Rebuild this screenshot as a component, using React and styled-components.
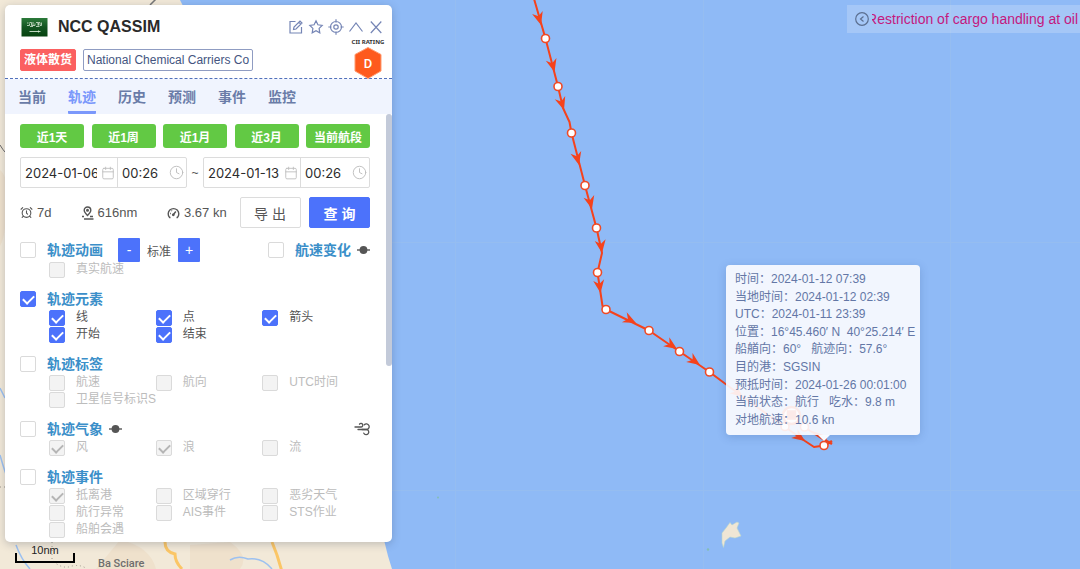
import React from "react";
import styled, { createGlobalStyle, css } from "styled-components";
import { AlarmClock, Calendar, Clock } from "lucide-react";

const GlobalStyle = createGlobalStyle`
  * { box-sizing: border-box; }
  body {
    margin: 0;
    font-family: "Liberation Sans", "Noto Sans CJK SC", sans-serif;
    font-size: 12px;
    color: #555;
  }
  button, input { font: inherit; color: inherit; margin: 0; }
`;

const Page = styled.main`
  position: relative;
  min-height: 100vh;
  overflow: hidden;
  background: #8fbaf6;
`;

const MapCanvas = styled.svg`
  position: absolute;
  inset: 0;
  width: 100%;
  height: 100%;
  display: block;
`;

/* ---------- map overlays ---------- */

const Notice = styled.div`
  position: absolute;
  top: 5px;
  right: 0;
  width: 233px;
  height: 28px;
  padding: 0 2px 0 7px;
  display: flex;
  align-items: center;
  gap: 2px;
  background: rgba(255, 255, 255, 0.2);
`;

const NoticeToggle = styled.button`
  flex: none;
  width: 16px;
  height: 16px;
  padding: 0;
  border: 0;
  background: none;
  display: flex;
`;

const NoticeText = styled.span`
  flex: 1;
  min-width: 0;
  overflow: hidden;
  display: flex;
  justify-content: flex-end;
  white-space: nowrap;
  font-size: 14px;
  line-height: 20px;
  color: #c4187e;
`;

const Scale = styled.div`
  position: absolute;
  left: 15px;
  bottom: 6px;
  width: 60px;
  height: 20px;
  text-align: center;
  font-size: 11px;
  line-height: 14px;
  color: #222;

  &::after {
    content: "";
    position: absolute;
    left: 0;
    right: 0;
    bottom: 0;
    height: 8px;
    border: 2px solid #000;
    border-top: 0;
  }
`;

const Tooltip = styled.div`
  position: absolute;
  left: 726px;
  top: 265px;
  width: 194px;
  height: 170px;
  padding: 6px 9px;
  display: grid;
  grid-auto-rows: 1fr;
  align-items: center;
  white-space: pre;
  line-height: 17px;
  color: #6377a6;
  background: rgba(253, 253, 255, 0.9);
  border-radius: 4px;
  box-shadow: 0 2px 10px rgba(30, 60, 120, 0.2);

  &::after {
    content: "";
    position: absolute;
    left: 92px;
    top: 100%;
    border: 6px solid transparent;
    border-top-color: #f8fbff;
    border-bottom: 0;
  }
`;

/* ---------- panel ---------- */

const Panel = styled.section`
  position: absolute;
  left: 5px;
  top: 5px;
  width: 387px;
  background: #fff;
  border-radius: 5px;
  box-shadow: 0 2px 8px rgba(40, 50, 80, 0.25);
`;

const Header = styled.header`
  height: 74px;
  padding: 11px 8px 0 15px;
  display: flex;
  justify-content: space-between;
  border-bottom: 1px dashed #5070bb;
`;

const HeaderMain = styled.div`
  display: flex;
  flex-direction: column;
  gap: 11px;
`;

const TitleRow = styled.div`
  height: 22px;
  display: flex;
  align-items: center;
  gap: 10px;
`;

const ShipName = styled.h1`
  margin: 0;
  font-size: 16px;
  line-height: 24px;
  color: #2a2a2a;
`;

const TagRow = styled.div`
  display: flex;
  gap: 7px;
`;

const Tag = styled.span`
  height: 22px;
  padding: 0 3px;
  line-height: 20px;
  border: 1px solid ${(p) => (p.$solid ? "#fb6060" : "#8f9cc2")};
  border-radius: 2px;
  background: ${(p) => (p.$solid ? "#fb6060" : "#fff")};
  color: ${(p) => (p.$solid ? "#fff" : "#44557f")};
  font-weight: ${(p) => (p.$solid ? 700 : 400)};
`;

const HeaderSide = styled.div`
  display: flex;
  flex-direction: column;
  align-items: flex-end;
`;

const Actions = styled.div`
  flex: none;
  height: 22px;
  display: flex;
  align-items: center;
  gap: 4px;
`;

const IconButton = styled.button`
  width: 16px;
  height: 16px;
  padding: 0;
  border: 0;
  background: none;
  color: #7585b5;
  display: flex;
`;

const Rating = styled.div`
  flex: none;
  width: 32px;
  display: flex;
  flex-direction: column;
  align-items: center;
  font-size: 6px;
  line-height: 8px;
  font-family: "Noto Sans", sans-serif;
  font-weight: 700;
  white-space: nowrap;
  color: #333;
`;

const RatingBadge = styled.svg`
  position: relative;
  display: block;
`;

const Tabs = styled.nav`
  height: 35px;
  padding: 0 13px;
  display: flex;
  gap: 22px;
  background: #f0f4fe;
`;

const Tab = styled.button`
  padding: 2px 0 0;
  border: 0;
  border-bottom: 3px solid ${(p) => (p.$active ? "#7b98fb" : "transparent")};
  border-radius: 1px;
  background: none;
  font-size: 14px;
  font-weight: 700;
  color: ${(p) => (p.$active ? "#7b98fb" : "#6a7ca8")};
`;

const Body = styled.div`
  position: relative;
  padding: 10px 22px 4px 15px;

  &::after {
    content: "";
    position: absolute;
    right: 0;
    top: 0;
    width: 6px;
    height: 252px;
    border-radius: 3px;
    background: #c3cad9;
  }
`;

const QuickRow = styled.div`
  display: flex;
  justify-content: space-between;
`;

const QuickButton = styled.button`
  width: 64px;
  height: 24px;
  padding: 0;
  border: 0;
  border-radius: 3px;
  background: #62c944;
  color: #fff;
  font-weight: 700;
`;

const DateRow = styled.div`
  margin-top: 9px;
  display: flex;
  align-items: center;
  justify-content: space-between;
`;

const DateTime = styled.div`
  width: 167px;
  height: 31px;
  display: flex;
  border: 1px solid #dcdcdc;
  border-radius: 2px;
`;

const Field = styled.label`
  flex: ${(p) => (p.$date ? "0 0 97px" : "1 1 0")};
  min-width: 0;
  padding: 0 2px 0 4px;
  display: flex;
  align-items: center;
  gap: 4px;
  color: #bdbdbd;
  ${(p) => p.$date && css`border-right: 1px solid #dcdcdc;`}

  svg { flex: none; }
`;

const FieldInput = styled.input`
  flex: 1;
  min-width: 0;
  width: 0;
  height: 28px;
  padding: 0;
  border: 0;
  outline: 0;
  background: none;
  font-family: Inter, sans-serif;
  font-size: 13px;
  color: #2c2c2c;
`;

const StatRow = styled.div`
  margin-top: 9px;
  display: flex;
  align-items: center;
  justify-content: space-between;
`;

const Stat = styled.span`
  width: ${(p) => p.$w}px;
  display: flex;
  align-items: center;
  gap: 4px;
  font-size: 13px;
  white-space: nowrap;
`;

const ActionButton = styled.button`
  width: 61px;
  height: 31px;
  padding: 0;
  border: 1px solid ${(p) => (p.$primary ? "#4c72fb" : "#dcdcdc")};
  border-radius: 2px;
  background: ${(p) => (p.$primary ? "#4c72fb" : "#fff")};
  color: ${(p) => (p.$primary ? "#fff" : "#555")};
  font-size: 14px;
  font-weight: ${(p) => (p.$primary ? 700 : 400)};
`;

const Sections = styled.div`
  margin-top: 11px;
  display: flex;
  flex-direction: column;
  gap: 11px;
`;

const SectionHead = styled.div`
  height: ${(p) => (p.$tall ? 22 : 20)}px;
  display: flex;
  align-items: center;
  justify-content: space-between;
`;

const HeadGroup = styled.div`
  display: flex;
  align-items: center;
  gap: 6px;
`;

const SectionLabel = styled.label`
  display: flex;
  align-items: center;
  gap: 11px;
  font-size: 14px;
  font-weight: 700;
  line-height: 20px;
  color: #3b8fc9;
`;

const Stepper = styled.div`
  margin-left: 9px;
  display: flex;
  align-items: center;
  gap: 7px;
`;

const StepButton = styled.button`
  width: 22px;
  height: 24px;
  padding: 0;
  border: 0;
  border-radius: 1px;
  background: #4c72fb;
  color: #fff;
  font-size: 14px;
`;

const Options = styled.div`
  margin: 0 1px 0 29px;
  display: grid;
  grid-template-columns: repeat(3, minmax(0, 1fr));
  grid-auto-rows: 17px;
`;

const Option = styled.label`
  display: flex;
  align-items: center;
  gap: 11px;
  line-height: 17px;
  white-space: nowrap;
  color: ${(p) => (p.$disabled ? "#bcbcbc" : "#555")};
`;

const Check = styled.input`
  appearance: none;
  flex: none;
  position: relative;
  width: 16px;
  height: 16px;
  border: 1px solid #dadada;
  border-radius: 2px;
  background: #fff;

  &:checked { background: #4c72fb; border-color: #4c72fb; }
  &:disabled { background: #f3f3f3; border-color: #dadada; }

  &:checked::after {
    content: "";
    position: absolute;
    left: 4px;
    top: 1px;
    width: 5px;
    height: 9px;
    border: solid #fff;
    border-width: 0 2px 2px 0;
    transform: rotate(45deg);
  }
  &:checked:disabled::after { border-color: #b5b5b5; }
`;

/* ---------- drawings ---------- */

const Flag = () => (
  <svg width="28" height="22" viewBox="0 0 28 22" aria-hidden="true">
    <defs>
      <linearGradient id="flag" x1="0" y1="0" x2="0" y2="1">
        <stop offset="0" stopColor="#2c7a3a" />
        <stop offset="0.5" stopColor="#125421" />
        <stop offset="1" stopColor="#07420f" />
      </linearGradient>
    </defs>
    <rect x="1.5" y="2" width="26" height="18.5" fill="url(#flag)" />
    <path d="M7 9.500h2.500V7.500M9.500 6.500h2v3h1.500M13 6v3.500h2V7.500M16 6.500h2v3M18.500 9.500V6.500h1.500v3h1.500V6.500M7 7h1.500M10 10.500h3M16 10.500h3.500" fill="none" stroke="#d4e5d2" strokeWidth="0.8" />
    <path d="M9.500 15.500h11M18.500 14.500v2" stroke="#d4e5d2" strokeWidth="0.9" />
  </svg>
);

const icons = {
  编辑: "M7.500 2.500h-5.500v11.500h11.500v-6M5.500 10.500l.5-2.500 6-6 2 2-6 6zM10.800 3.200l2 2",
  收藏: "M8 1.800l1.900 4 4.300.6-3.100 3 .7 4.400L8 11.700l-3.800 2.100.7-4.400-3.100-3 4.300-.6z",
  定位: "M8 2.500a5.500 5.500 0 1 0 0 11a5.500 5.500 0 1 0 0-11M8 5.800a2.200 2.200 0 1 0 0 4.400a2.200 2.200 0 1 0 0-4.400M8 .3v3.200M8 12.500v3.200M.3 8h3.200M12.500 8h3.200",
  收起: "M1.500 12.500L8 4l6.500 8.500",
  关闭: "M2.800 2.500l10.500 11.500M13.300 2.500L2.800 14",
};

const LineIcon = ({ d, size = 16 }) => (
  <svg width={size} height={size} viewBox="0 0 16 16" fill="none" stroke="currentColor" strokeWidth="1.2" aria-hidden="true">
    <path d={d} />
  </svg>
);

const DistanceIcon = () => (
  <svg width="13" height="14" viewBox="0 0 13 14" fill="none" stroke="#555" strokeWidth="1.400" aria-hidden="true">
    <path d="M6.500 9.500C4.500 7.500 3.200 6 3.200 4.300a3.300 3.300 0 0 1 6.600 0C9.800 6 8.500 7.500 6.500 9.500z" />
    <circle cx="6.500" cy="4.300" r="0.800" />
    <path d="M3 10.500H1M9 10.500h3M3 13h9.500" />
  </svg>
);

const SpeedIcon = () => (
  <svg width="13" height="13" viewBox="0 0 13 13" fill="none" stroke="#555" strokeWidth="1.400" aria-hidden="true">
    <path d="M3.500 11.500H2.600A5.300 5.300 0 1 1 10.400 11.500H9.500" />
    <path d="M6.500 8.500L8.800 5.500M3.200 7.500h.8M4.500 4.500l.4.400" />
    <circle cx="6.300" cy="8.800" r="0.700" />
  </svg>
);

const WindIcon = () => (
  <svg width="16" height="14" viewBox="0 0 16 14" fill="none" stroke="#555" strokeWidth="1.300" strokeLinecap="round" aria-hidden="true">
    <path d="M1 5H7A1.800 1.800 0 1 0 5.500 2.200" />
    <path d="M4 7.500H12.500A2.800 2.800 0 1 0 10.300 2.800" />
    <path d="M8 7.500H12.500A2.600 2.600 0 1 1 9.800 11.200" />
  </svg>
);

const SliderDot = () => (
  <svg width="13" height="10" viewBox="0 0 13 10" fill="#555" aria-hidden="true">
    <path d="M0 4.300h13v1.400H0z" />
    <circle cx="6.500" cy="5" r="3.900" />
  </svg>
);

const trackPoints = [
  [545.5, 38.5], [558, 86.5], [571.5, 133], [585, 185.5], [596.5, 228], [597.5, 272.5],
  [606, 309.5], [649, 330.5], [679.5, 351.5], [709.5, 372],
];

const arrows = [
  [541, 25, 74], [554.5, 72, 75], [564, 110, 72], [579, 165, 76], [592, 209, 76],
  [602, 253, 82], [600.5, 293, 82], [636, 323, 26], [677, 349, 34], [700, 365, 35],
  [743, 397, 38], [805, 441, 35],
];

const MapView = () => (
  <MapCanvas aria-hidden="true">
    <path d="M0 0H180L184 8L240 120L300 300L340 440L384 540L388 556L392 569L400 600L420 2000H0z" fill="#f2e9d8" />
    <path d="M0 170q12 10 6 50q-2 20-6 26zM120 540q30 6 36 29h-60zM190 545l40-3q20 14 10 27h-50z" fill="#eddcc5" opacity="0.6" />
    <path d="M0 388l5 10M0 455q5 18 8 24M16 545q5 14 14 24M230 560q8-5 18-1q14-2 24 10" fill="none" stroke="#9dc1f0" strokeWidth="1.500" />
    <path d="M150 5l6-6" stroke="#777" strokeWidth="1.500" />
    <path d="M165 542q0 10 10 12q0 8 7 15M272 542q6 14 10 30" fill="none" stroke="#fbc666" strokeWidth="3" />
    <path d="M52 542v18q10 10 20 6q10-2 16 4M0 487h5" fill="none" stroke="#9c968c" strokeDasharray="1 3" />
    <path d="M0 145q3 5 5 7" fill="none" stroke="#666" />
    <text x="98" y="567" fontSize="11" fontFamily="Roboto, sans-serif" fontWeight="500" fill="#6e6e6e">Ba Sciare</text>
    <path d="M455.500 0V2000M703.500 0V2000M950.500 0V2000M392 242.500H3000M392 490.500H3000" stroke="#9bc0ee" strokeWidth="1" opacity="0.5" />
    <path d="M722 533l4-5 4-5.500 2 2.500 5-3 2 1-2 5 4 8-6 2-5-1-5 4-1.500 6.500-1.500-4.500z" fill="#efe6d5" stroke="#b9d6cd" strokeWidth="0.600" />
    <circle cx="708" cy="549.500" r="1.200" fill="#84bdb5" />
    <circle cx="438" cy="497.500" r="1" fill="#84bdb5" />
    <g fill="none" stroke="#f5421c" strokeWidth="2" strokeLinejoin="round">
      <path d="M533.500-3L545.500 38.500L558 86.500L563 108L569.500 122L571.500 133L585 185.500L596.500 228L602 253L597.500 272.500L602.500 306L606 309.500L649 330.500L679.500 351.500L709.500 372L743 397L785 427L805 441L814 447L824 445.500L826 437L812 432L804 427L791 417" />
      <path d="M814 433l9 6 9 5M822 447l10-6" strokeWidth="2.500" />
    </g>
    {arrows.map(([x, y, a]) => (
      <path key={x} d="M0 0L-13-5.500L-9 0L-13 5.500z" transform={`translate(${x} ${y}) rotate(${a})`} fill="#f5421c" />
    ))}
    <g fill="#fff" stroke="#ef4a26" strokeWidth="1.600">
      {trackPoints.map(([x, y]) => <circle key={y} cx={x} cy={y} r="4" />)}
      <circle cx="785" cy="426.5" r="4" />
      <circle cx="804.5" cy="427" r="4" />
      <circle cx="824" cy="445.5" r="4" />
      <circle cx="791.5" cy="415.5" r="8.5" strokeWidth="2.5" />
      <rect x="787.5" y="411" width="8" height="8" fill="#f5421c" />
    </g>
  </MapCanvas>
);

/* ---------- data ---------- */

const tabs = ["当前", "轨迹", "历史", "预测", "事件", "监控"];
const quick = ["近1天", "近1周", "近1月", "近3月", "当前航段"];

const details = [
  "时间：2024-01-12 07:39",
  "当地时间：2024-01-12 02:39",
  "UTC：2024-01-11 23:39",
  "位置：16°45.460′ N  40°25.214′ E",
  "船艏向：60°   航迹向：57.6°",
  "目的港：SGSIN",
  "预抵时间：2024-01-26 00:01:00",
  "当前状态：航行   吃水：9.8 m",
  "对地航速：10.6 kn",
];

const OptionList = ({ items, checked = [], disabled }) => (
  <Options>
    {items.map((name) => (
      <Option key={name} $disabled={disabled}>
        <Check type="checkbox" defaultChecked={checked.includes(name)} disabled={disabled} />
        {name}
      </Option>
    ))}
  </Options>
);

const SectionTitle = ({ children, checked }) => (
  <SectionLabel>
    <Check type="checkbox" defaultChecked={checked} />
    {children}
  </SectionLabel>
);

const DateTimeField = ({ name, date, time }) => (
  <DateTime>
    <Field $date>
      <FieldInput aria-label={`${name}日期`} defaultValue={date} />
      <Calendar size={14} strokeWidth={1.5} />
    </Field>
    <Field>
      <FieldInput aria-label={`${name}时间`} defaultValue={time} />
      <Clock size={15} strokeWidth={1.5} />
    </Field>
  </DateTime>
);

export default function App() {
  return (
    <Page>
      <GlobalStyle />
      <MapView />
      <Notice>
        <NoticeToggle aria-label="收起公告">
          <svg width="16" height="16" viewBox="0 0 16 16" fill="none" stroke="#5b6f90" strokeWidth="1.2">
            <circle cx="8" cy="8" r="6.3" />
            <path d="M9.500 5.500L6.500 8l3 2.500" />
          </svg>
        </NoticeToggle>
        <NoticeText><span>Restriction of cargo handling at oil</span></NoticeText>
      </Notice>
      <Tooltip role="tooltip">
        {details.map((line) => <span key={line}>{line}</span>)}
      </Tooltip>
      <Scale>10nm</Scale>

      <Panel>
        <Header>
          <HeaderMain>
            <TitleRow>
              <Flag />
              <ShipName>NCC QASSIM</ShipName>
            </TitleRow>
            <TagRow>
              <Tag $solid>液体散货</Tag>
              <Tag>National Chemical Carriers Co</Tag>
            </TagRow>
          </HeaderMain>
          <HeaderSide>
            <Actions>
              {Object.entries(icons).map(([name, d]) => (
                <IconButton key={name} aria-label={name}><LineIcon d={d} /></IconButton>
              ))}
            </Actions>
            <Rating>
              CII RATING
              <RatingBadge width="30" height="34" viewBox="0 0 30 34">
                <path d="M15 1.500L28 8.500V25L15 32.500L2 25V8.500z" fill="#fe5a1d" stroke="#ff9b70" strokeWidth="1" />
                <text x="15" y="21.5" textAnchor="middle" fontSize="13" fontWeight="500" fontFamily="Roboto, sans-serif" fill="#fff">D</text>
              </RatingBadge>
            </Rating>
          </HeaderSide>
        </Header>

        <Tabs>
          {tabs.map((name) => <Tab key={name} $active={name === "轨迹"}>{name}</Tab>)}
        </Tabs>

        <Body>
          <QuickRow>
            {quick.map((name) => <QuickButton key={name}>{name}</QuickButton>)}
          </QuickRow>
          <DateRow>
            <DateTimeField name="开始" date="2024-01-06" time="00:26" />
            <span>~</span>
            <DateTimeField name="结束" date="2024-01-13" time="00:26" />
          </DateRow>
          <StatRow>
            <Stat $w={52}><AlarmClock size={13} />7d</Stat>
            <Stat $w={78}><DistanceIcon />616nm</Stat>
            <Stat $w={64}><SpeedIcon />3.67 kn</Stat>
            <ActionButton>导 出</ActionButton>
            <ActionButton $primary>查 询</ActionButton>
          </StatRow>

          <Sections>
            <div>
              <SectionHead $tall>
                <HeadGroup>
                  <SectionTitle>轨迹动画</SectionTitle>
                  <Stepper>
                    <StepButton aria-label="减速">-</StepButton>
                    标准
                    <StepButton aria-label="加速">+</StepButton>
                  </Stepper>
                </HeadGroup>
                <HeadGroup>
                  <SectionTitle>航速变化</SectionTitle>
                  <SliderDot />
                </HeadGroup>
              </SectionHead>
              <OptionList items={["真实航速"]} disabled />
            </div>
            <div>
              <SectionHead><SectionTitle checked>轨迹元素</SectionTitle></SectionHead>
              <OptionList items={["线", "点", "箭头", "开始", "结束"]} checked={["线", "点", "箭头", "开始", "结束"]} />
            </div>
            <div>
              <SectionHead><SectionTitle>轨迹标签</SectionTitle></SectionHead>
              <OptionList items={["航速", "航向", "UTC时间", "卫星信号标识S"]} disabled />
            </div>
            <div>
              <SectionHead>
                <HeadGroup>
                  <SectionTitle>轨迹气象</SectionTitle>
                  <SliderDot />
                </HeadGroup>
                <WindIcon />
              </SectionHead>
              <OptionList items={["风", "浪", "流"]} checked={["风", "浪"]} disabled />
            </div>
            <div>
              <SectionHead><SectionTitle>轨迹事件</SectionTitle></SectionHead>
              <OptionList
                items={["抵离港", "区域穿行", "恶劣天气", "航行异常", "AIS事件", "STS作业", "船舶会遇"]}
                checked={["抵离港"]}
                disabled
              />
            </div>
          </Sections>
        </Body>
      </Panel>
    </Page>
  );
}
